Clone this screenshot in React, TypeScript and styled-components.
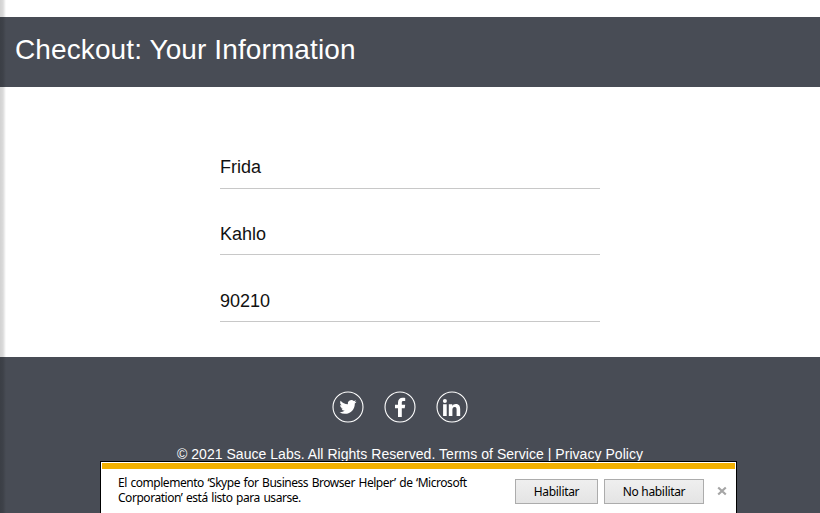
import React from 'react';
import styled, { createGlobalStyle } from 'styled-components';

const GlobalStyle = createGlobalStyle`
  * { box-sizing: border-box; }
  body { margin: 0; background: #fff; overflow: hidden; }
`;

const Page = styled.div`
  position: relative;
  display: flex;
  flex-direction: column;
  width: 820px;
  height: 513px;
  padding-top: 17px;
  overflow: hidden;
  background: #fff;
  font-family: 'Liberation Sans', Arial, sans-serif;
`;

const TitleBar = styled.header`
  display: flex;
  align-items: center;
  flex: none;
  height: 70px;
  padding: 0 15px 5px;
  background: #484c55;
`;

const Title = styled.h1`
  margin: 0;
  color: #fff;
  font-size: 28px;
  font-weight: 400;
  line-height: 32px;
  letter-spacing: 0.11px;
  white-space: nowrap;
`;

const Form = styled.form`
  display: flex;
  flex-direction: column;
  flex: none;
  width: 380px;
  height: 270px;
  margin: 0 auto;
  padding-top: 59px;
`;

const Field = styled.input`
  display: block;
  width: 100%;
  height: 43px;
  padding: 0;
  border: 0;
  border-bottom: 1px solid #c8c8c8;
  outline: 0;
  background: transparent;
  color: #111;
  font: 18px 'Liberation Sans', Arial, sans-serif;

  & + & { height: 42px; margin-top: 24px; padding-top: 1px; }
  & + & + & { height: 43px; padding-top: 2px; }
`;

const Footer = styled.footer`
  display: flex;
  flex-direction: column;
  align-items: center;
  flex: 1;
  padding-top: 34px;
  background: #484c55;
`;

const Socials = styled.div`
  display: flex;
  gap: 20px;
  padding-right: 20px;
`;

const SocialIcon = styled.svg`
  display: block;
  width: 32px;
  height: 32px;
  fill: #fff;

  circle { fill: none; stroke: #fff; stroke-width: 1.1; }
`;

const Copyright = styled.p`
  margin: 23px 0 0;
  color: #fff;
  font-size: 14px;
  line-height: 16px;
  letter-spacing: 0.035px;
  white-space: nowrap;
`;

const EdgeShadow = styled.div`
  position: absolute;
  top: 0;
  bottom: 0;
  left: 0;
  width: 6px;
  background: linear-gradient(to right, rgba(0, 0, 0, 0.18), rgba(0, 0, 0, 0.14) 50%, rgba(0, 0, 0, 0));
`;

const Notification = styled.aside`
  position: absolute;
  left: 100px;
  bottom: 0;
  width: 637px;
  height: 52px;
  padding: 1px;
  border: 1px solid #000;
  border-bottom: 0;
  background: #fff;
  color: #000;
  font-family: 'Noto Sans', 'Open Sans', sans-serif;
  font-size: 12px;
`;

const Accent = styled.div`
  height: 6px;
  background: #f2b000;
`;

const NoticeRow = styled.div`
  display: flex;
  align-items: flex-start;
  padding: 6px 7px 0 16px;
`;

const Message = styled.p`
  width: 397px;
  margin: 0;
  padding-right: 40px;
  line-height: 15px;
  letter-spacing: -0.46px;
  word-spacing: 0.9px;
`;

const Button = styled.button<{ $width: number }>`
  flex: none;
  width: ${({ $width }) => $width}px;
  height: 25px;
  margin: 4px 6px 0 0;
  padding: 0;
  border: 1px solid #acacac;
  background: linear-gradient(#efefef, #e4e4e4);
  color: #000;
  font: inherit;
  line-height: 23px;
  letter-spacing: -0.32px;
`;

const Close = styled.button`
  margin: 11px 0 0 7px;
  padding: 0;
  border: 0;
  background: none;

  svg { display: block; stroke: #a5a5a5; stroke-width: 2.2; }
`;

export default function App() {
  return (
    <>
      <GlobalStyle />
      <Page>
        <TitleBar>
          <Title>Checkout: Your Information</Title>
        </TitleBar>
        <Form>
          <Field defaultValue="Frida" aria-label="First name" />
          <Field defaultValue="Kahlo" aria-label="Last name" />
          <Field defaultValue="90210" aria-label="Postal code" />
        </Form>
        <Footer>
          <Socials>
            <SocialIcon viewBox="0 0 32 32">
              <circle cx="16" cy="16" r="15" />
              <g transform="translate(7.5 7.4) scale(.71)">
                <path d="M23.95 4.57a10 10 0 0 1-2.82.78 4.96 4.96 0 0 0 2.16-2.73c-.95.56-2 .96-3.13 1.19a4.92 4.92 0 0 0-8.38 4.48C7.69 8.1 4.07 6.13 1.64 3.16a4.82 4.82 0 0 0-.67 2.48c0 1.71.87 3.21 2.19 4.1a4.9 4.9 0 0 1-2.23-.62v.06a4.92 4.92 0 0 0 3.95 4.83 5 5 0 0 1-2.21.08 4.94 4.94 0 0 0 4.6 3.42A9.87 9.87 0 0 1 0 19.54a14 14 0 0 0 7.55 2.21c9.05 0 14-7.5 14-13.98 0-.21 0-.42-.02-.63a9.94 9.94 0 0 0 2.46-2.55z" />
              </g>
            </SocialIcon>
            <SocialIcon viewBox="0 0 32 32">
              <circle cx="16" cy="16" r="15" />
              <path d="M14 26v-8.7h-3v-3.5h3v-2.3c0-3.1 1.9-4.8 4.6-4.8 1.3 0 2.2.1 2.6.2v3.2h-1.7c-1.4 0-1.7.7-1.7 1.7v2h3.4l-.5 3.5h-2.9V26z" />
            </SocialIcon>
            <SocialIcon viewBox="0 0 32 32">
              <circle cx="16" cy="16" r="15" />
              <path transform="translate(0 .7)" d="M6.9 9.3a2 2 0 1 1 4 0 2 2 0 0 1-4 0zM7.1 12.6h3.6v11.6H7.1zM12.8 12.6h3.5v1.6c.5-.9 1.7-1.9 3.5-1.9 3.6 0 4.4 2.4 4.4 5.5v6.4h-3.6v-5.7c0-1.3 0-3.1-1.9-3.1s-2.3 1.5-2.3 3v5.8h-3.6z" />
            </SocialIcon>
          </Socials>
          <Copyright>© 2021 Sauce Labs. All Rights Reserved. Terms of Service | Privacy Policy</Copyright>
        </Footer>
        <EdgeShadow />
        <Notification>
          <Accent />
          <NoticeRow>
            <Message>
              El complemento ‘Skype for Business Browser Helper’ de ‘Microsoft Corporation’ está listo para usarse.
            </Message>
            <Button $width={83}>Habilitar</Button>
            <Button $width={100}>No habilitar</Button>
            <Close aria-label="Cerrar">
              <svg width="10" height="10" viewBox="0 0 10 10"><path d="M1.2 1.5 8.8 8.5M8.8 1.5 1.2 8.5" /></svg>
            </Close>
          </NoticeRow>
        </Notification>
      </Page>
    </>
  );
}
